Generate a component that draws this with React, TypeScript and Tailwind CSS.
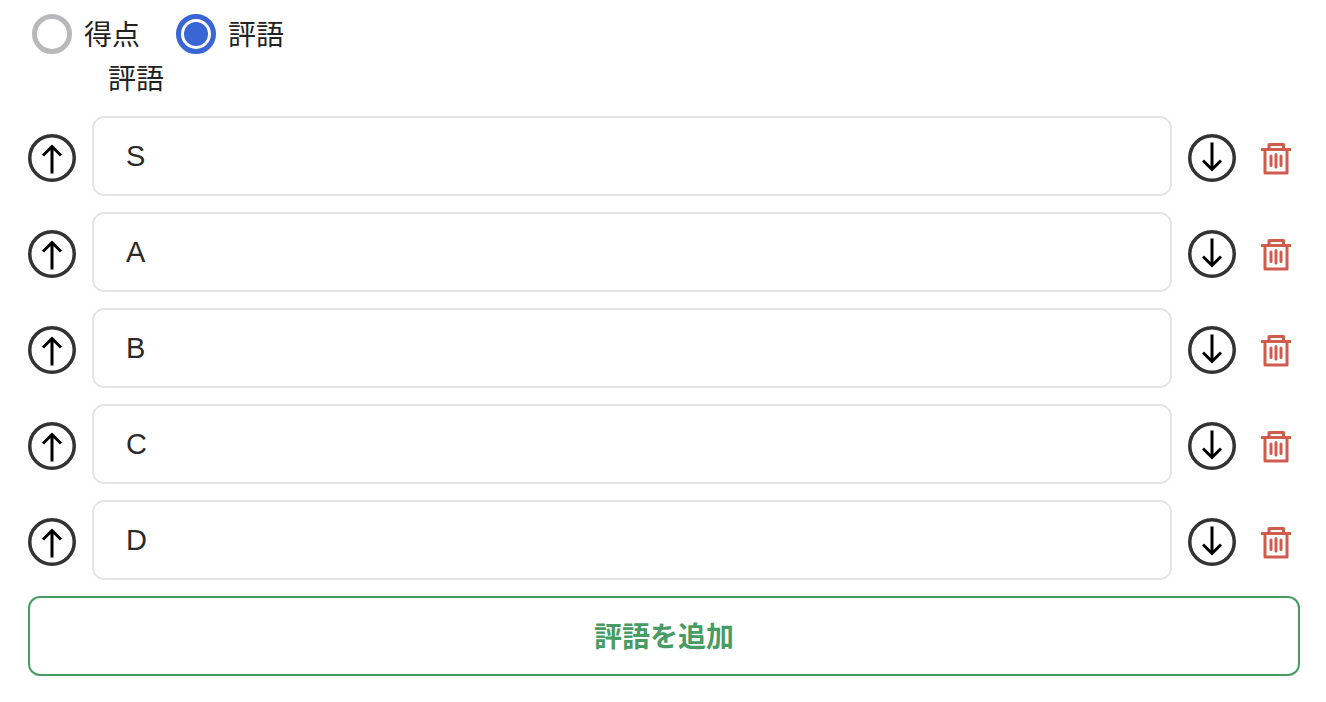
import React, { useState } from 'react';

const grades = ['S', 'A', 'B', 'C', 'D'];

const ArrowCircle = ({ down }: { down?: boolean }) => (
  <svg width="48" height="48" viewBox="0 0 48 48" fill="none" className="shrink-0">
    <circle cx="24" cy="24" r="22.25" stroke="#333333" strokeWidth="3.5" />
    {down ? (
      <path d="M24 8.500V35.500M15 26.500L24 35.500L33 26.500" stroke="#000000" strokeWidth="3" />
    ) : (
      <path d="M24 39.500V12.500M15 21.500L24 12.500L33 21.500" stroke="#000000" strokeWidth="3" />
    )}
  </svg>
);

const TrashIcon = () => (
  <svg width="48" height="48" viewBox="0 0 48 48" fill="none" className="shrink-0" stroke="#cf5c4c" strokeWidth="3">
    <path d="M9 15.500H39" />
    <path d="M13 15.500V39H35V15.500" strokeLinejoin="round" />
    <path d="M17 15V10.500H31.500V15" strokeLinejoin="round" />
    <path d="M19 22V31.500M24 20.500V33M29 22V31.500" strokeLinecap="round" />
  </svg>
);

const Radio = ({ label, checked, onClick }: { label: string; checked: boolean; onClick: () => void }) => (
  <label className="flex items-center gap-3 cursor-pointer" onClick={onClick}>
    {checked ? (
      <span className="flex items-center justify-center w-10 h-10 rounded-full border-[5px] border-[#3a65d4]">
        <span className="w-6 h-6 shrink-0 rounded-full bg-[#3a65d4]" />
      </span>
    ) : (
      <span className="w-10 h-10 rounded-full border-[5px] border-[#b9b9bb]" />
    )}
    <span className="h-10 text-[28px] leading-[44px] text-[#222222]">{label}</span>
  </label>
);

export default function App() {
  const [mode, setMode] = useState('comment');

  return (
    <div className="w-[1326px] h-[702px] bg-white overflow-hidden pl-7 pr-[26px] pt-[14px] font-['Liberation_Sans','Noto_Sans_CJK_JP',sans-serif]">
      <div className="flex items-center gap-9 pl-1">
        <Radio label="得点" checked={mode === 'score'} onClick={() => setMode('score')} />
        <Radio label="評語" checked={mode === 'comment'} onClick={() => setMode('comment')} />
      </div>
      <div className="h-10 pl-20 mt-[4px] text-[28px] leading-[44px] text-[#222222]">評語</div>

      <div className="flex flex-col gap-4 mt-[18px]">
        {grades.map((grade) => (
          <div key={grade} className="flex items-center gap-4">
            <button type="button" className="mt-1">
              <ArrowCircle />
            </button>
            <input
              type="text"
              defaultValue={grade}
              className="w-[1080px] h-20 rounded-xl border-2 border-[#e6e6ea] px-8 text-[29px] text-[#2a2a2a] outline-none"
            />
            <button type="button" className="mt-1">
              <ArrowCircle down />
            </button>
            <button type="button" className="mt-1">
              <TrashIcon />
            </button>
          </div>
        ))}
      </div>

      <button
        type="button"
        className="w-[1272px] h-20 mt-4 pt-1 rounded-xl border-2 border-[#479c63] text-[28px] font-bold text-[#479c63]"
      >
        評語を追加
      </button>
    </div>
  );
}
